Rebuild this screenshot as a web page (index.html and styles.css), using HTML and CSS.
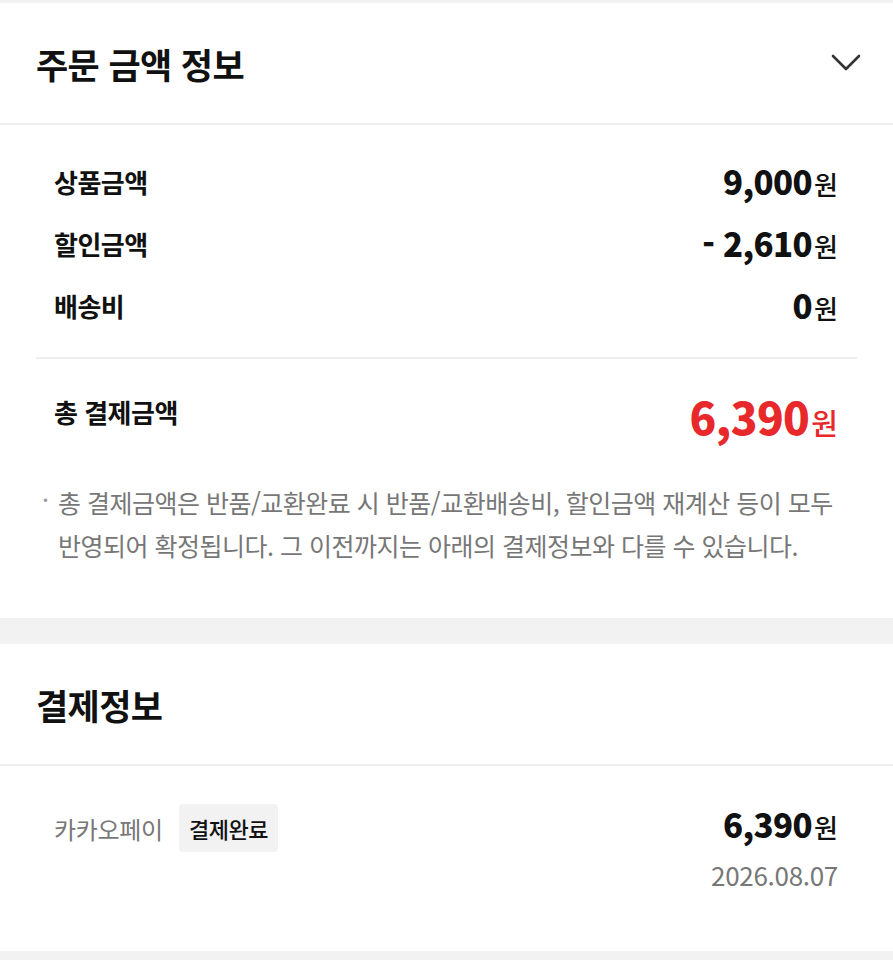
FILE: index.html
```html
<!DOCTYPE html>
<html lang="ko">
<head>
    <meta charset="UTF-8">
    <meta name="viewport" content="width=device-width, initial-scale=1.0">
    <title>주문 금액 정보</title>
    <link rel="stylesheet" href="styles.css">
</head>
<body>
    <div class="band band-top"></div>

    <section class="panel">
        <div class="panel-head">
            <h2>주문 금액 정보</h2>
            <svg class="chevron" width="30" height="18" viewBox="0 0 30 18">
                <polyline points="2,2 15,15 28,2" fill="none" stroke="#333" stroke-width="2.6" stroke-linecap="round" stroke-linejoin="round"/>
            </svg>
        </div>

        <div class="panel-body">
            <div class="rows">
                <div class="row">
                    <span class="label">상품금액</span>
                    <span class="price"><b>9,000</b>원</span>
                </div>
                <div class="row">
                    <span class="label">할인금액</span>
                    <span class="price"><b>- 2,610</b>원</span>
                </div>
                <div class="row">
                    <span class="label">배송비</span>
                    <span class="price"><b>0</b>원</span>
                </div>
            </div>

            <div class="total">
                <span class="label">총 결제금액</span>
                <span class="price red"><b>6,390</b>원</span>
            </div>

            <p class="note">총 결제금액은 반품/교환완료 시 반품/교환배송비, 할인금액 재계산 등이 모두 반영되어 확정됩니다. 그 이전까지는 아래의 결제정보와 다를 수 있습니다.</p>
        </div>
    </section>

    <div class="band band-mid"></div>

    <section class="panel">
        <div class="panel-head">
            <h2>결제정보</h2>
        </div>

        <div class="pay">
            <div class="pay-left">
                <span class="method">카카오페이</span>
                <span class="badge">결제완료</span>
            </div>
            <div class="pay-right">
                <span class="price"><b>6,390</b>원</span>
                <span class="date">2026.08.07</span>
            </div>
        </div>
    </section>

    <div class="band band-bottom"></div>
</body>
</html>
```

FILE: styles.css
```css
body {
    margin: 0;
    background-color: white;
    font-family: "Noto Sans CJK KR", "Noto Sans", sans-serif;
    color: #111;
}
.band {
    background-color: #f2f2f2;
}
.band-top {
    height: 3px;
}
.band-mid {
    height: 26px;
}
.band-bottom {
    height: 10px;
}
.panel-head {
    height: 120px;
    padding: 0 32px 0 36px;
    display: flex;
    align-items: center;
    justify-content: space-between;
    border-bottom: 2px solid #eeeeee;
}
.panel-head h2 {
    margin: 0;
    font-size: 35px;
    font-weight: 700;
    letter-spacing: -0.6px;
}
.chevron {
    display: block;
}
.panel-body {
    padding: 0 36px;
}
.rows {
    padding: 25px 19px 21px 18px;
    border-bottom: 2px solid #eeeeee;
}
.row {
    height: 62px;
    display: flex;
    align-items: center;
    justify-content: space-between;
}
.label {
    font-size: 26px;
    font-weight: 700;
    letter-spacing: -0.5px;
}
.price {
    font-size: 26px;
    font-weight: 500;
    color: #111;
}
.price b {
    font-size: 33px;
    font-weight: 900;
    margin-right: 2px;
    letter-spacing: -0.6px;
}
.total {
    display: flex;
    justify-content: space-between;
    align-items: flex-start;
    padding: 30px 19px 0 18px;
}
.total .label {
    margin-top: 4px;
}
.red {
    color: #e8292c;
    font-size: 29px;
}
.red b {
    font-size: 44px;
    line-height: 54px;
}
.note {
    margin: 38px 0 0;
    padding: 0 19px 51px 22px;
    position: relative;
    font-size: 25px;
    line-height: 43px;
    color: #777;
    letter-spacing: -0.5px;
}
.note::before {
    content: "·";
    position: absolute;
    left: 6px;
    top: -3px;
    color: #999;
}
.pay {
    display: flex;
    justify-content: space-between;
    padding: 34px 55px 58px 54px;
}
.pay-left {
    display: flex;
    align-items: center;
    gap: 16px;
    height: 48px;
    margin-top: 4px;
}
.method {
    font-size: 24px;
    color: #777;
    letter-spacing: -0.3px;
}
.badge {
    background-color: #f2f2f2;
    border-radius: 4px;
    height: 48px;
    padding: 0 10px;
    display: flex;
    align-items: center;
    font-size: 22px;
    font-weight: 500;
    color: #111;
    letter-spacing: -0.5px;
}
.pay-right {
    display: flex;
    flex-direction: column;
    align-items: flex-end;
    gap: 8px;
}
.date {
    font-size: 26px;
    color: #777;
    letter-spacing: -0.3px;
}
```
